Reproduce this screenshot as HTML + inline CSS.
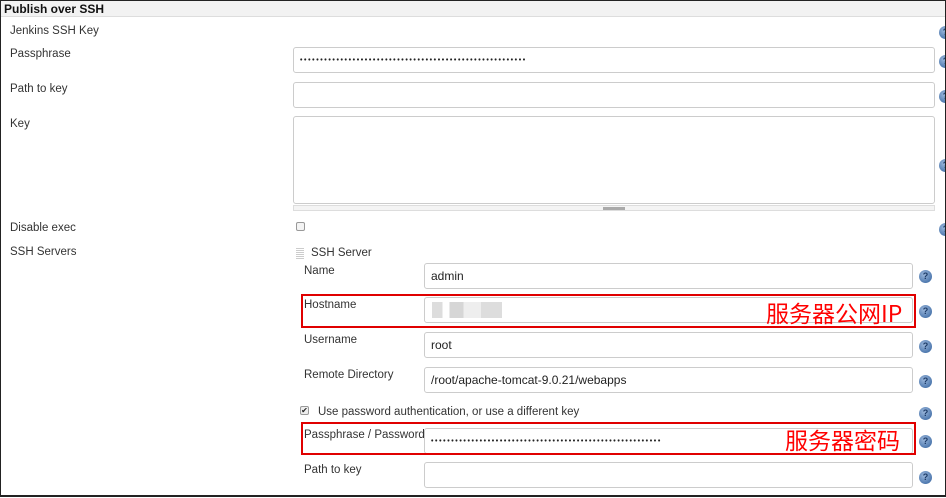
<!DOCTYPE html>
<html><head><meta charset="utf-8"><style>
*{margin:0;padding:0;box-sizing:border-box}
body{width:946px;height:498px;overflow:hidden;background:#fff;font-family:"Liberation Sans",Arial,sans-serif;font-size:11.5px;color:#333;position:relative}
.frame{position:absolute;left:0;top:0;width:946px;height:497px;border:1px solid #222;border-bottom:2px solid #222;z-index:5}
.a{position:absolute;white-space:nowrap}
.in{position:absolute;border:1px solid #ccc;border-radius:3px;background:#fff;font-size:12px;color:#222;padding-left:6px;display:flex;align-items:center}
.h{position:absolute;width:13px;height:13px;border-radius:50%;background:radial-gradient(circle at 40% 35%,#9cb8dc,#2f5f9c);color:#1c3a66;font-size:9px;font-weight:bold;text-align:center;line-height:13px}
.red{position:absolute;border:2px solid #e00000}
.cn{position:absolute;color:#f00;font-family:"Noto Sans CJK SC","WenQuanYi Zen Hei",sans-serif;font-size:23px;line-height:24px}
.dots{letter-spacing:1.6px;font-size:7px;font-weight:bold}
</style></head><body>
<div class="frame"></div>
<div class="a" style="left:1px;top:1px;width:944px;height:16px;background:#f2f2f2;border-bottom:1px solid #ddd"></div>
<div class="a" style="left:4px;top:2px;font-weight:bold;font-size:12px;color:#111">Publish over SSH</div>
<div class="a" style="left:10px;top:25px">Jenkins SSH Key</div>
<div class="h" style="left:939px;top:26px">?</div>
<div class="a" style="left:10px;top:48px">Passphrase</div>
<div class="in" style="left:293px;top:47px;width:642px;height:26px"><span class="dots">••••••••••••••••••••••••••••••••••••••••••••••••••••••••</span></div>
<div class="h" style="left:939px;top:55px">?</div>
<div class="a" style="left:10px;top:83px">Path to key</div>
<div class="in" style="left:293px;top:82px;width:642px;height:26px"></div>
<div class="h" style="left:939px;top:90px">?</div>
<div class="a" style="left:10px;top:118px">Key</div>
<div class="in" style="left:293px;top:116px;width:642px;height:88px"></div>
<div class="a" style="left:293px;top:205px;width:642px;height:6px;border:1px solid #ddd;background:#f4f4f4"></div>
<div class="a" style="left:603px;top:207px;width:22px;height:3px;background:#aaa"></div>
<div class="h" style="left:939px;top:159px">?</div>
<div class="a" style="left:10px;top:222px">Disable exec</div>
<div class="a" style="left:296px;top:222px;width:9px;height:9px;border:1px solid #999;border-radius:2px;background:#f4f4f4"></div>
<div class="h" style="left:939px;top:223px">?</div>
<div class="a" style="left:10px;top:246px">SSH Servers</div>
<div class="a" style="left:296px;top:247px;width:8px;height:12px;background:repeating-linear-gradient(0deg,#ccc 0 1px,#fff 1px 2px)"></div>
<div class="a" style="left:311px;top:247px">SSH Server</div>
<div class="a" style="left:304px;top:265px">Name</div>
<div class="in" style="left:424px;top:263px;width:489px;height:26px">admin</div>
<div class="h" style="left:919px;top:270px">?</div>
<div class="a" style="left:304px;top:299px">Hostname</div>
<div class="in" style="left:424px;top:297px;width:489px;height:26px"></div>
<div class="a" style="left:432px;top:302px;width:70px;height:16px;background:linear-gradient(90deg,#ddd 0 15%,#fff 15% 25%,#d6d6d6 25% 45%,#eee 45% 70%,#ddd 70%)"></div>
<div class="red" style="left:301px;top:294px;width:615px;height:34px"></div>
<div class="cn" style="left:766px;top:300px">服务器公网IP</div>
<div class="h" style="left:919px;top:305px">?</div>
<div class="a" style="left:304px;top:334px">Username</div>
<div class="in" style="left:424px;top:332px;width:489px;height:26px">root</div>
<div class="h" style="left:919px;top:340px">?</div>
<div class="a" style="left:304px;top:369px">Remote Directory</div>
<div class="in" style="left:424px;top:367px;width:489px;height:26px">/root/apache-tomcat-9.0.21/webapps</div>
<div class="h" style="left:919px;top:375px">?</div>
<div class="a" style="left:300px;top:406px;width:9px;height:9px;border:1px solid #999;border-radius:2px;background:#eee;font-size:8px;line-height:7px;text-align:center;color:#222">✔</div>
<div class="a" style="left:318px;top:406px">Use password authentication, or use a different key</div>
<div class="h" style="left:919px;top:407px">?</div>
<div class="a" style="left:304px;top:429px">Passphrase / Password</div>
<div class="in" style="left:424px;top:428px;width:489px;height:26px"><span class="dots">•••••••••••••••••••••••••••••••••••••••••••••••••••••••••</span></div>
<div class="red" style="left:301px;top:422px;width:615px;height:33px"></div>
<div class="cn" style="left:785px;top:427px">服务器密码</div>
<div class="h" style="left:919px;top:435px">?</div>
<div class="a" style="left:304px;top:464px">Path to key</div>
<div class="in" style="left:424px;top:462px;width:489px;height:26px"></div>
<div class="h" style="left:919px;top:471px">?</div>
</body></html>
